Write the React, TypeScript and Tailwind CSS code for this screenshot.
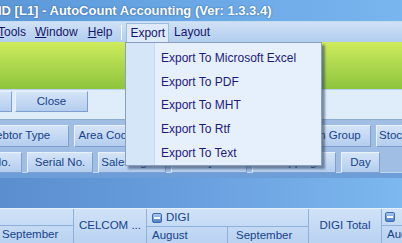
import React from "react";

const font = { fontFamily: '"Liberation Sans", Arial, sans-serif' };

function Btn({ label, w, ml = 0, h = 22 }: { label: string; w: number; ml?: number; h?: number }) {
  return (
    <div
      className="shrink-0 flex items-center justify-center overflow-hidden whitespace-nowrap border border-[#e9f1fb] border-b-[#7d9fcf] border-r-[#7d9fcf] bg-gradient-to-b from-[#d4e4f7] to-[#b4cdee] text-[11.5px] text-[#15428b]"
      style={{ width: w, height: h, marginLeft: ml }}
    >
      {label}
    </div>
  );
}

export default function App() {
  return (
    <div className="relative w-[402px] h-[243px] overflow-hidden bg-[#dfecfa]" style={font}>
      {/* Title bar */}
      <div className="h-[21px] flex items-center bg-gradient-to-r from-[#5c98d8] via-[#6aa8e6] to-[#79b5ee] overflow-hidden whitespace-nowrap">
        <span className="ml-[-2px] text-[13px] font-bold text-white [text-shadow:0_0_2px_#2a5a9a]">
          ID [L1] - AutoCount Accounting (Ver: 1.3.3.4)
        </span>
      </div>
      <div className="h-[1px] bg-[#c3daf3]" />
      {/* Menu bar */}
      <div className="h-[20px] flex items-center bg-gradient-to-b from-[#cfe1f5] to-[#b1cdee] text-[12px] text-[#15156b] whitespace-nowrap">
        <span className="ml-[-2px]"><u>T</u>ools</span>
        <span className="ml-[9px]"><u>W</u>indow</span>
        <span className="ml-[10px]"><u>H</u>elp</span>
        <span className="ml-[9px] w-[1px] h-[15px] bg-[#9bb7dc] border-r border-white" />
        <span className="ml-[4px] h-[19px] mt-[1px] px-[3px] flex items-center bg-[#dceafa] border border-[#9dbbe0] border-b-0">Export</span>
        <span className="ml-[5px]">Layout</span>
      </div>
      {/* Green bar */}
      <div className="h-[47px] bg-gradient-to-b from-[#cdec5c] to-[#8ec43e]" />
      {/* Panel */}
      <div className="h-[30px] flex items-start pt-[1px] bg-[#dfecfa] border-t border-[#b8d0ec]">
        <Btn label="s" w={40} ml={-28} h={21} />
        <Btn label="Close" w={73} ml={3} h={21} />
      </div>
      {/* Group area */}
      <div className="h-[53px] flex flex-col gap-[5px] pt-[5px] bg-[#a0bde3] border-t border-[#8aaad6]">
        <div className="flex gap-[5px]">
          <Btn label="Debtor Type" w={100} ml={-31} />
          <Btn label="Area Code" w={64} />
          <Btn label="Agent" w={70} />
          <Btn label="Item" w={70} />
          <Btn label="Item Group" w={78} />
          <Btn label="Stock Group" w={70} />
        </div>
        <div className="flex gap-[5px]">
          <Btn label="No." w={40} ml={-18} h={21} />
          <Btn label="Serial No." w={66} h={21} />
          <Btn label="Sales Agent" w={68} h={21} />
          <Btn label="Project" w={76} h={21} />
          <Btn label="Shipping" w={84} h={21} />
          <Btn label="Day" w={39} h={21} />
        </div>
      </div>
      {/* band */}
      <div className="h-[1px] bg-[#c2d7f1]" />
      <div className="h-[5px] bg-[#6e9ed8]" />
      {/* Blue area */}
      <div className="h-[30px] bg-gradient-to-r from-[#5a8ecf] via-[#6aa0df] to-[#7db8ef]" />
      {/* Grid header */}
      <div className="h-[35px] flex border-t border-[#e6f0fb] text-[11.5px] text-[#15428b] whitespace-nowrap bg-gradient-to-b from-[#d0e2f7] to-[#b9d2f1]">
        <div className="w-[74px] shrink-0 flex flex-col border-r border-[#8fb0dc]">
          <div className="h-[19px] border-b border-[#8fb0dc]" />
          <div className="flex-1 flex items-center pl-[2px]">September</div>
        </div>
        <div className="w-[73px] shrink-0 flex items-center justify-center border-r border-[#8fb0dc]">CELCOM ...</div>
        <div className="w-[162px] shrink-0 flex flex-col border-r border-[#8fb0dc]">
          <div className="h-[19px] flex items-center pl-[5px] gap-[4px] border-b border-[#8fb0dc]">
            <span className="w-[10px] h-[10px] rounded-[2px] bg-gradient-to-b from-[#a9c8ef] to-[#4f80c6] border border-[#3d6db0] flex items-center justify-center">
              <span className="w-[6px] h-[2px] bg-white" />
            </span>
            DIGI
          </div>
          <div className="flex-1 flex">
            <div className="w-[81px] border-r border-[#8fb0dc] flex items-center pl-[5px]">August</div>
            <div className="flex-1 flex items-center pl-[8px]">September</div>
          </div>
        </div>
        <div className="w-[73px] shrink-0 flex items-center justify-center border-r border-[#8fb0dc]">DIGI Total</div>
        <div className="flex-1 flex flex-col">
          <div className="h-[19px] flex items-center pl-[3px] border-b border-[#8fb0dc]">
            <span className="w-[10px] h-[10px] rounded-[2px] bg-gradient-to-b from-[#a9c8ef] to-[#4f80c6] border border-[#3d6db0] flex items-center justify-center">
              <span className="w-[6px] h-[2px] bg-white" />
            </span>
          </div>
          <div className="flex-1 flex items-center pl-[5px]">August</div>
        </div>
      </div>

      {/* Dropdown menu */}
      <div className="absolute left-[125px] top-[42px] w-[197px] h-[124px] bg-[#e6f0fc] border border-[#8a9fc0] shadow-[3px_3px_2px_rgba(40,60,90,0.55)] flex text-[12px] text-[#1e1a80]">
        <div className="w-[29px] shrink-0 bg-[#d6e6f9] border-r border-[#c6daf2]" />
        <div className="flex flex-col pt-[3px] pl-[6px]">
          {["Export To Microsoft Excel", "Export To PDF", "Export To MHT", "Export To Rtf", "Export To Text"].map((t) => (
            <div key={t} className="h-[24px] flex items-center whitespace-nowrap">{t}</div>
          ))}
        </div>
      </div>
    </div>
  );
}
